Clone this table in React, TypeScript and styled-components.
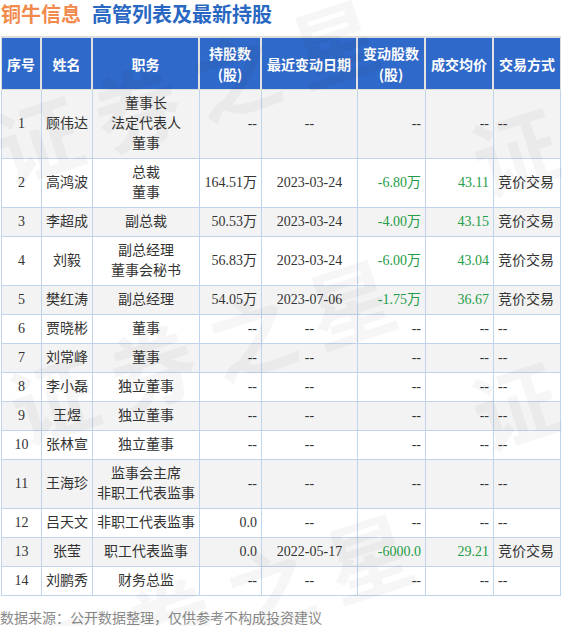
import React from "react";
import styled, { createGlobalStyle } from "styled-components";

const GlobalStyle = createGlobalStyle`
  html, body { margin: 0; padding: 0; background: #ffffff; }
  body { font-family: "Noto Sans CJK SC", "Noto Sans", sans-serif; }
`;

const Page = styled.div`
  position: relative;
  width: 562px;
  height: 626px;
  overflow: hidden;
  background: #fff;
`;

const TitleBar = styled.div`
  display: flex;
  align-items: center;
  gap: 11px;
  height: 28px;
  padding-left: 1px;
  margin-bottom: 8px;
  font-family: "Noto Sans CJK SC", sans-serif;
  font-size: 20px;
  font-weight: 700;
  line-height: 28px;
`;

const Brand = styled.span`
  color: #f28a4c;
`;

const Heading = styled.span`
  color: #2867c2;
`;

const Table = styled.table`
  margin-left: 1px;
  width: 560px;
  table-layout: fixed;
  border-collapse: separate;
  border-spacing: 0;
`;

const HeadCell = styled.th`
  background: #2f69c9;
  color: #fff;
  font-family: "Noto Sans CJK SC", sans-serif;
  font-size: 14px;
  font-weight: 700;
  line-height: 21px;
  padding: 5px 2px 4px;
  text-align: center;
  white-space: nowrap;
  border-top: 2px solid #dcdcdc;
  border-right: 2px solid #e2e2e2;
  border-bottom: 1px solid #dcdcdc;
  &:first-child { border-left: 1px solid #dcdcdc; }
  &:last-child { border-right: 1px solid #dcdcdc; }
`;

const Row = styled.tr<{ $odd: boolean }>`
  background: ${(p) => (p.$odd ? "#f3f3f3" : "#ffffff")};
`;

const Cell = styled.td<{ $align?: "left" | "center" | "right"; $green?: boolean }>`
  font-family: "Liberation Serif", "Noto Sans CJK SC", serif;
  font-size: 14px;
  line-height: 20px;
  height: 20px;
  color: ${(p) => (p.$green ? "#1f9d48" : "#333333")};
  text-align: ${(p) => p.$align ?? "center"};
  padding: 4px 4px;
  white-space: nowrap;
  border-right: 1px solid #bfd5ec;
  border-bottom: 1px solid #bfd5ec;
  &:first-child { border-left: 1px solid #bfd5ec; }
`;

const Footer = styled.div`
  margin-top: 10px;
  font-family: "Noto Sans CJK SC", sans-serif;
  font-size: 14px;
  line-height: 22px;
  color: #8a8a8a;
`;

const Watermark = styled.div`
  position: absolute;
  inset: 0;
  pointer-events: none;
`;

const MarkText = styled.span<{ $x: number; $y: number }>`
  position: absolute;
  left: ${(p) => p.$x}px;
  top: ${(p) => p.$y}px;
  font-family: "Noto Sans CJK SC", sans-serif;
  font-size: 86px;
  font-weight: 700;
  line-height: 1;
  letter-spacing: 18px;
  color: rgba(0, 0, 0, 0.035);
  white-space: nowrap;
  transform-origin: left center;
  transform: translateY(-50%) rotate(-18deg);
`;

type Exec = {
  no: number;
  name: string;
  role: string[];
  hold: string;
  date: string;
  change: string;
  price: string;
  method: string;
};

const D = "--";
const rows: Exec[] = [
  { no: 1, name: "顾伟达", role: ["董事长", "法定代表人", "董事"], hold: D, date: D, change: D, price: D, method: D },
  { no: 2, name: "高鸿波", role: ["总裁", "董事"], hold: "164.51万", date: "2023-03-24", change: "-6.80万", price: "43.11", method: "竞价交易" },
  { no: 3, name: "李超成", role: ["副总裁"], hold: "50.53万", date: "2023-03-24", change: "-4.00万", price: "43.15", method: "竞价交易" },
  { no: 4, name: "刘毅", role: ["副总经理", "董事会秘书"], hold: "56.83万", date: "2023-03-24", change: "-6.00万", price: "43.04", method: "竞价交易" },
  { no: 5, name: "樊红涛", role: ["副总经理"], hold: "54.05万", date: "2023-07-06", change: "-1.75万", price: "36.67", method: "竞价交易" },
  { no: 6, name: "贾晓彬", role: ["董事"], hold: D, date: D, change: D, price: D, method: D },
  { no: 7, name: "刘常峰", role: ["董事"], hold: D, date: D, change: D, price: D, method: D },
  { no: 8, name: "李小磊", role: ["独立董事"], hold: D, date: D, change: D, price: D, method: D },
  { no: 9, name: "王煜", role: ["独立董事"], hold: D, date: D, change: D, price: D, method: D },
  { no: 10, name: "张林宣", role: ["独立董事"], hold: D, date: D, change: D, price: D, method: D },
  { no: 11, name: "王海珍", role: ["监事会主席", "非职工代表监事"], hold: D, date: D, change: D, price: D, method: D },
  { no: 12, name: "吕天文", role: ["非职工代表监事"], hold: "0.0", date: D, change: D, price: D, method: D },
  { no: 13, name: "张莹", role: ["职工代表监事"], hold: "0.0", date: "2022-05-17", change: "-6000.0", price: "29.21", method: "竞价交易" },
  { no: 14, name: "刘鹏秀", role: ["财务总监"], hold: D, date: D, change: D, price: D, method: D },
];

const colWidths = [41, 51, 107, 62, 96, 68, 68, 67];

const headers: string[][] = [
  ["序号"],
  ["姓名"],
  ["职务"],
  ["持股数", "(股)"],
  ["最近变动日期"],
  ["变动股数", "(股)"],
  ["成交均价"],
  ["交易方式"],
];

const Lines = ({ items }: { items: string[] }) => (
  <>
    {items.map((t, i) => (
      <React.Fragment key={i}>
        {i > 0 && <br />}
        {t}
      </React.Fragment>
    ))}
  </>
);

const marks = [
  { x: -4, y: 150 },
  { x: 474, y: 162 },
  { x: 12, y: 410 },
  { x: 474, y: 416 },
  { x: 30, y: 664 },
];

export default function App() {
  return (
    <Page>
      <GlobalStyle />
      <TitleBar>
        <Brand>铜牛信息</Brand>
        <Heading>高管列表及最新持股</Heading>
      </TitleBar>
      <Table>
        <colgroup>
          {colWidths.map((w, i) => (
            <col key={i} style={{ width: w }} />
          ))}
        </colgroup>
        <thead>
          <tr>
            {headers.map((h, i) => (
              <HeadCell key={i}>
                <Lines items={h} />
              </HeadCell>
            ))}
          </tr>
        </thead>
        <tbody>
          {rows.map((r) => (
            <Row key={r.no} $odd={r.no % 2 === 1}>
              <Cell>{r.no}</Cell>
              <Cell>{r.name}</Cell>
              <Cell>
                <Lines items={r.role} />
              </Cell>
              <Cell $align="right">{r.hold}</Cell>
              <Cell>{r.date}</Cell>
              <Cell $align="right" $green={r.change !== D}>
                {r.change}
              </Cell>
              <Cell $align="right" $green={r.price !== D}>
                {r.price}
              </Cell>
              <Cell $align="left">{r.method}</Cell>
            </Row>
          ))}
        </tbody>
      </Table>
      <Footer>数据来源：公开数据整理，仅供参考不构成投资建议</Footer>
      <Watermark>
        {marks.map((m, i) => (
          <MarkText key={i} $x={m.x} $y={m.y}>
            证券之星
          </MarkText>
        ))}
      </Watermark>
    </Page>
  );
}
